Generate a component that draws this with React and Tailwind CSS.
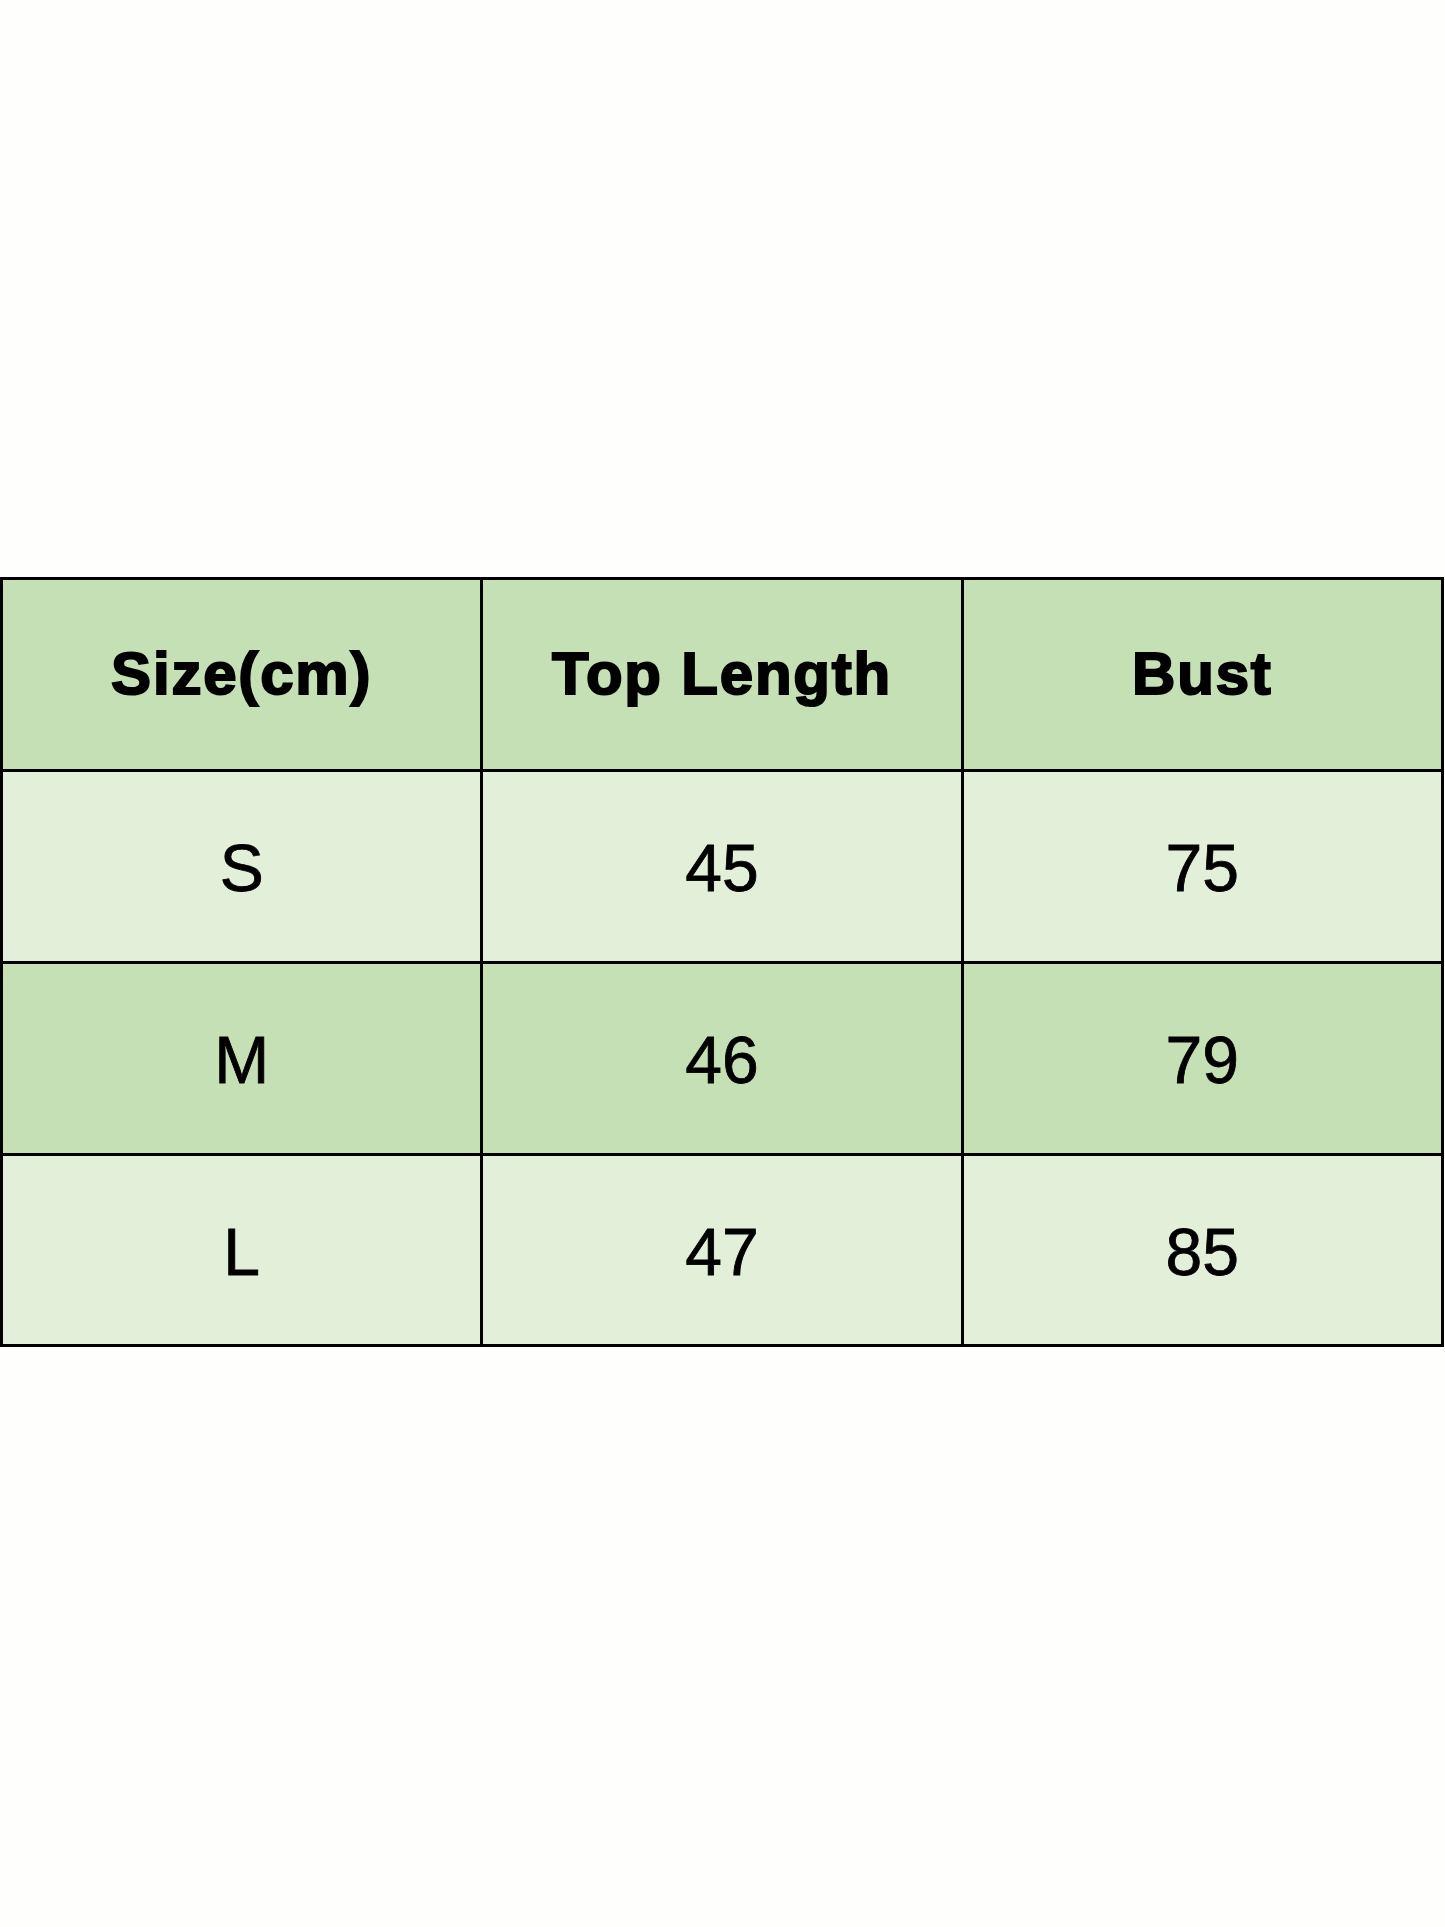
import React from "react";

const rows = [
  { cells: ["Size(cm)", "Top Length", "Bust"], head: true, bg: "bg-[#c5e0b4]" },
  { cells: ["S", "45", "75"], bg: "bg-[#e2efd9]" },
  { cells: ["M", "46", "79"], bg: "bg-[#c5e0b4]" },
  { cells: ["L", "47", "85"], bg: "bg-[#e2efd9]" },
];

export default function App() {
  return (
    <div className="w-[1445px] h-[1927px] bg-[#fefefc] pt-[577px] font-['Liberation_Sans',Arial,sans-serif] text-black">
      <div className="w-[1444px] grid grid-cols-3 grid-rows-[189px_189px_189px_188px] gap-[3px] bg-black p-[3px]">
        {rows.map((row, i) =>
          row.cells.map((c, j) => (
            <div
              key={i + "-" + j}
              className={`${row.bg} flex items-center justify-center ${
                row.head
                  ? "text-[60px] font-bold tracking-[1.8px] [-webkit-text-stroke:2px_black] pb-[2px]"
                  : "text-[66px] [-webkit-text-stroke:0.8px_black] pt-[4px]"
              }`}
            >
              {c}
            </div>
          ))
        )}
      </div>
    </div>
  );
}
